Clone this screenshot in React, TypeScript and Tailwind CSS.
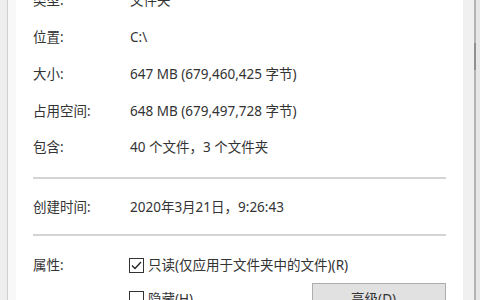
import React from "react";

const font = {
  fontFamily: '"Noto Sans", "Noto Sans CJK SC", sans-serif',
};

function Row({ label, value }: { label: string; value: string }) {
  return (
    <div className="flex h-[36.75px] shrink-0 items-center">
      <div className="w-[97px] shrink-0">{label}</div>
      <div>{value}</div>
    </div>
  );
}

function Checkbox({ checked }: { checked?: boolean }) {
  return (
    <span className="mr-[4px] flex h-[15px] w-[15px] shrink-0 items-center justify-center border border-[#333333] bg-white">
      {checked && (
        <svg width="13" height="13" viewBox="0 0 13 13">
          <polyline
            points="2,6.5 5,9.5 11,3"
            fill="none"
            stroke="#222222"
            strokeWidth="1.3"
          />
        </svg>
      )}
    </span>
  );
}

export default function App() {
  return (
    <div
      className="flex h-[300px] w-[480px] overflow-hidden bg-white text-[13.5px] text-[#333333]"
      style={font}
    >
      <div className="w-[7px] shrink-0 bg-[#eeeeee]" />
      <div className="w-px shrink-0 bg-[#cfcfcf]" />
      <div className="w-[8px] shrink-0 bg-[#f8f8f8]" />
      <div className="flex min-w-0 flex-1 flex-col pl-[17px] pr-[17px]">
        <div className="-mt-[18px] shrink-0">
          <Row label="类型:" value="文件夹" />
          <Row label="位置:" value="C:\" />
          <Row label="大小:" value="647 MB (679,460,425 字节)" />
          <Row label="占用空间:" value="648 MB (679,497,728 字节)" />
          <Row label="包含:" value="40 个文件，3 个文件夹" />
        </div>
        <div className="mt-[11px] h-[2px] shrink-0 bg-[#d4d4d4]" />
        <div className="mt-[10px] flex h-[36px] shrink-0 items-center">
          <div className="w-[97px] shrink-0">创建时间:</div>
          <div>2020年3月21日，9:26:43</div>
        </div>
        <div className="mt-[9px] h-[2px] shrink-0 bg-[#d4d4d4]" />
        <div className="mt-[19px] flex shrink-0">
          <div className="w-[96px] shrink-0 leading-[21px]">属性:</div>
          <div className="flex flex-1 flex-col">
            <div className="flex h-[21px] shrink-0 items-center">
              <Checkbox checked />
              <span>只读(仅应用于文件夹中的文件)(R)</span>
            </div>
            <div className="mt-[7px] flex shrink-0 items-center justify-between">
              <div className="flex items-center">
                <Checkbox />
                <span>隐藏(H)</span>
              </div>
              <div className="flex h-[32px] w-[134px] shrink-0 items-center justify-center border border-[#adadad] bg-[#e1e1e1]">
                高级(D)...
              </div>
            </div>
          </div>
        </div>
      </div>
      <div className="w-[11px] shrink-0 bg-[#f0f0f0]" />
      <div className="flex w-[2px] shrink-0 flex-col bg-[#b4b4b4]">
        <div className="mt-[43px] h-[27px] bg-[#909090]" />
      </div>
      <div className="w-[4px] shrink-0 bg-[#e6e6e6]" />
    </div>
  );
}
